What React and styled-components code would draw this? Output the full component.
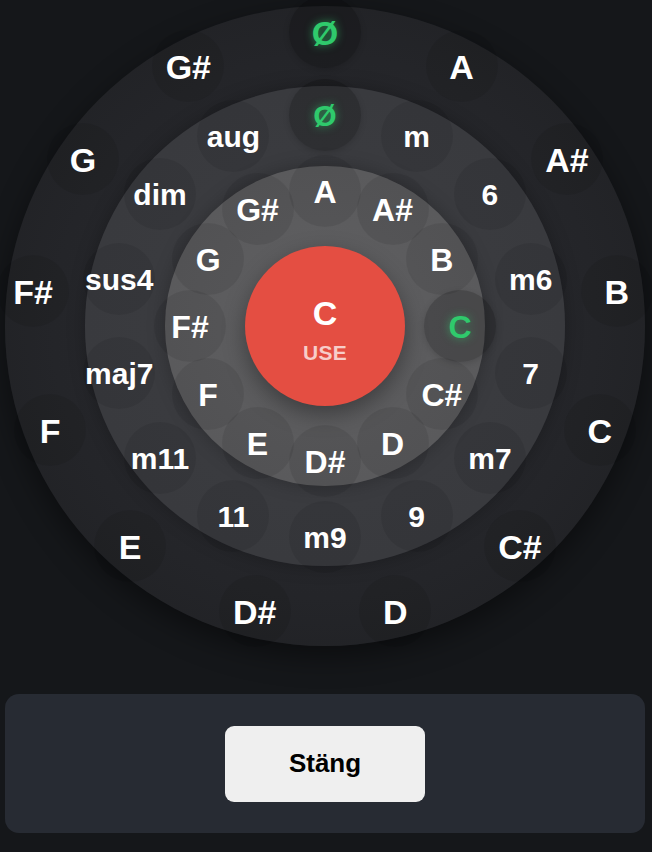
import React from "react";
import styled, { createGlobalStyle, css } from "styled-components";

const GlobalStyle = createGlobalStyle`
  html, body {
    margin: 0;
    padding: 0;
    background: #15171a;
  }
  body {
    font-family: "Liberation Sans", Arial, Helvetica, sans-serif;
    color: #fff;
  }
`;

const Page = styled.div`
  width: 652px;
  height: 852px;
  display: flex;
  flex-direction: column;
  padding: 6px 0 0 5px;
  box-sizing: border-box;
  overflow: hidden;
  background: #15171a;
`;

const Disc = styled.div`
  position: relative;
  width: ${(p) => p.$d}px;
  height: ${(p) => p.$d}px;
  border-radius: 50%;
  display: flex;
  align-items: center;
  justify-content: center;
  flex-shrink: 0;
  background: ${(p) => p.$bg};
  box-shadow: ${(p) => p.$shadow || "none"};
`;

const Center = styled.button`
  position: relative;
  z-index: 2;
  width: 160px;
  height: 160px;
  border: none;
  border-radius: 50%;
  background: #e44e42;
  box-shadow: 0 8px 22px rgba(0, 0, 0, 0.35);
  display: flex;
  flex-direction: column;
  align-items: center;
  justify-content: center;
  gap: 12px;
  padding: 6px 0 0;
  font-family: "Liberation Sans", Arial, sans-serif;
  cursor: pointer;
`;

const CenterNote = styled.span`
  color: #fff;
  font-size: 34px;
  font-weight: 700;
  line-height: 1;
`;

const CenterLabel = styled.span`
  color: rgba(255, 255, 255, 0.72);
  font-size: 21px;
  font-weight: 700;
  line-height: 1;
  letter-spacing: 0.3px;
`;

const RingItem = styled.div`
  position: absolute;
  z-index: 1;
  width: 72px;
  height: 72px;
  border-radius: 50%;
  transform: translate(-50%, -50%);
  display: flex;
  align-items: center;
  justify-content: center;
  padding-top: 2px;
  box-sizing: border-box;
  font-weight: 700;
  font-size: ${(p) => p.$fs}px;
  line-height: 1;
  color: #fff;
  white-space: nowrap;
  background: rgba(0, 0, 0, 0.08);
  ${(p) =>
    p.$active &&
    css`
      background: rgba(0, 0, 0, 0.2);
      color: #2fca6c;
      text-shadow: 0 0 8px rgba(47, 202, 108, 0.65);
      box-shadow: 0 2px 6px rgba(0, 0, 0, 0.15);
    `}
`;

const Panel = styled.div`
  margin-top: 48px;
  width: 640px;
  height: 139px;
  border-radius: 14px;
  background: #272b33;
  display: flex;
  align-items: center;
  justify-content: center;
`;

const CloseButton = styled.button`
  width: 200px;
  height: 76px;
  border: none;
  border-radius: 9px;
  background: #efefef;
  color: #000;
  font-family: "Liberation Sans", Arial, sans-serif;
  font-weight: 700;
  font-size: 26px;
  cursor: pointer;
`;

const OUTER = ["Ø", "A", "A#", "B", "C", "C#", "D", "D#", "E", "F", "F#", "G", "G#"];
const MIDDLE = ["Ø", "m", "6", "m6", "7", "m7", "9", "m9", "11", "m11", "maj7", "sus4", "dim", "aug"];
const INNER = ["A", "A#", "B", "C", "C#", "D", "D#", "E", "F", "F#", "G", "G#"];

function Ring({ items, discR, itemR, fs, active }) {
  return items.map((label, i) => {
    const a = (i / items.length) * Math.PI * 2;
    const x = discR + itemR * Math.sin(a);
    const y = discR - itemR * Math.cos(a);
    return (
      <RingItem key={label + i} $fs={fs} $active={label === active} style={{ left: x, top: y }}>
        {label}
      </RingItem>
    );
  });
}

export default function App() {
  return (
    <>
      <GlobalStyle />
      <Page>
        <Disc
          $d={640}
          $bg="radial-gradient(circle at 50% 50%, #2a2b2f 0%, #242529 60%, #1f2023 88%, #1b1c1f 100%)"
          $shadow="0 10px 30px rgba(0,0,0,0.45)"
        >
          <Ring items={OUTER} discR={320} itemR={294} fs={34} active="Ø" />
          <Disc
            $d={480}
            $bg="radial-gradient(circle at 50% 50%, #3d3e42 0%, #393a3e 70%, #36373b 100%)"
            $shadow="0 0 18px rgba(0,0,0,0.25)"
          >
            <Ring items={MIDDLE} discR={240} itemR={211} fs={30} active="Ø" />
            <Disc
              $d={320}
              $bg="radial-gradient(circle at 50% 50%, #606062 0%, #5a5a5c 70%, #555658 100%)"
              $shadow="0 0 18px rgba(0,0,0,0.25)"
            >
              <Ring items={INNER} discR={160} itemR={135} fs={32} active="C" />
              <Center>
                <CenterNote>C</CenterNote>
                <CenterLabel>USE</CenterLabel>
              </Center>
            </Disc>
          </Disc>
        </Disc>
        <Panel>
          <CloseButton>Stäng</CloseButton>
        </Panel>
      </Page>
    </>
  );
}
